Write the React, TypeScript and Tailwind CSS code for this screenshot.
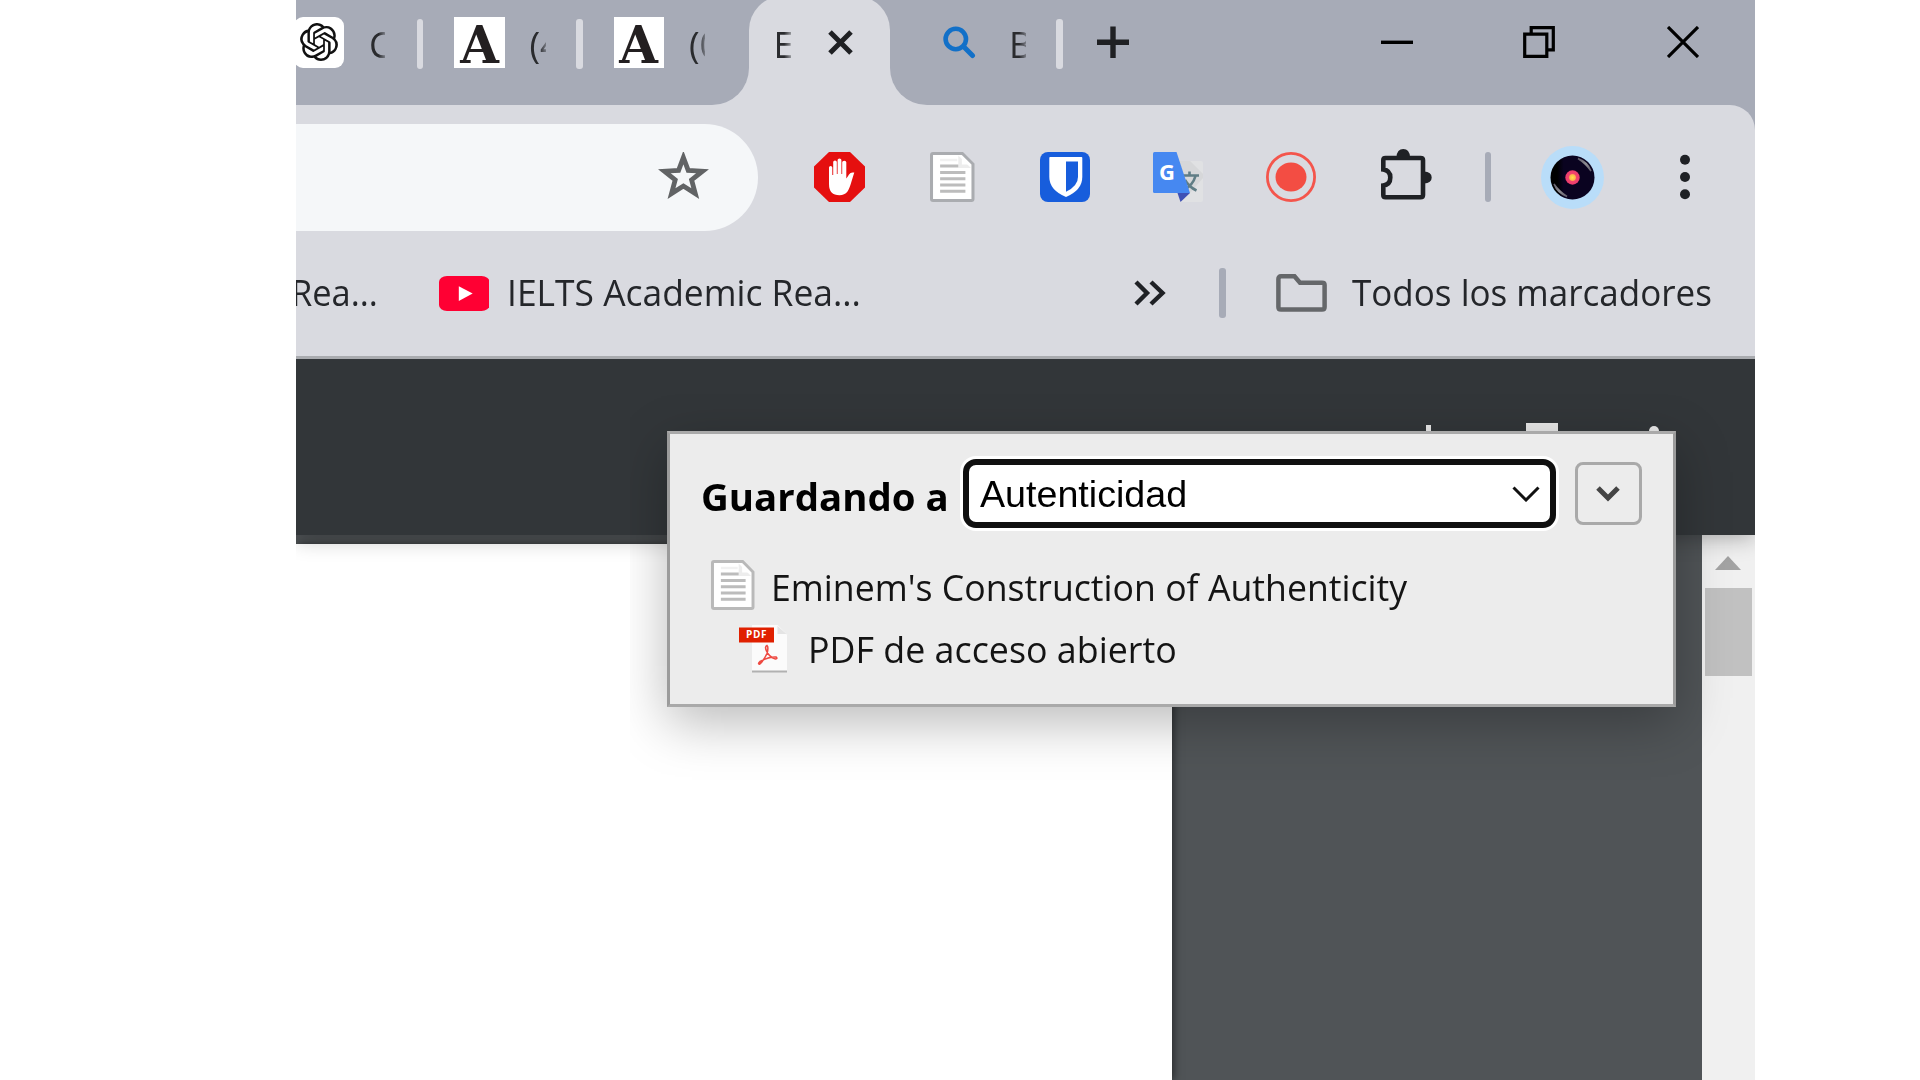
import React, { useLayoutEffect, useRef, useState } from "react";
import { SiOpenai } from "react-icons/si";

/* Single-line text condensed or expanded to a given advance width. */
function FitText({ children, width, className = "" }: { children: string; width: number; className?: string }) {
  const ref = useRef<HTMLSpanElement>(null);
  const [scale, setScale] = useState(1);
  useLayoutEffect(() => {
    if (ref.current) setScale(width / ref.current.offsetWidth);
  }, [width, children]);
  return (
    <span className="block shrink-0" style={{ width }}>
      <span
        ref={ref}
        className={"inline-block origin-left whitespace-nowrap " + className}
        style={{ transform: `scaleX(${scale})` }}
      >
        {children}
      </span>
    </span>
  );
}

const segoe = "font-['Open_Sans',sans-serif] text-[36px] leading-[48px]";

function TabTitle({ children, className }: { children: string; className: string }) {
  return (
    <span
      className={
        "mt-[21px] block shrink-0 overflow-hidden whitespace-nowrap text-[#2a2b2e] [mask-image:linear-gradient(to_right,black_60%,transparent_125%)] " +
        segoe + " " + className
      }
    >
      {children}
    </span>
  );
}

function TabSeparator({ className }: { className: string }) {
  return <span className={"mt-[18.5px] h-[50.5px] w-[6.5px] shrink-0 rounded-[3px] bg-[#d9dae0] " + className} />;
}

function AcademiaIcon({ className }: { className: string }) {
  return (
    <span
      className={
        "mt-[17px] flex h-[50.5px] w-[50.5px] shrink-0 items-center justify-center bg-white pt-[3px] font-['DejaVu_Serif',serif] text-[53px] font-bold leading-[50px] text-[#231f20] " +
        className
      }
    >
      <span className="inline-block scale-x-[0.94]">A</span>
    </span>
  );
}

function TabStrip() {
  return (
    <div className="flex h-[105px] items-start overflow-hidden bg-[#a7abb7]">
      <span className="-ml-[2px] mt-[17px] flex h-[50.5px] w-[50px] shrink-0 items-center justify-center rounded-[9px] bg-white">
        <SiOpenai className="-ml-px h-[38px] w-[38px] text-[#111]" />
      </span>
      <TabTitle className="ml-[25px] w-[16px]">C</TabTitle>
      <TabSeparator className="ml-[31.5px]" />
      <AcademiaIcon className="ml-[31px]" />
      <TabTitle className="ml-[25px] w-[16px]">(4</TabTitle>
      <TabSeparator className="ml-[30.5px]" />
      <AcademiaIcon className="ml-[31px]" />
      <TabTitle className="ml-[25px] w-[16px]">(0</TabTitle>
      <span className="ml-[6.5px] mt-[68px] h-[37px] w-[37px] shrink-0 bg-[#d9dae0]">
        <span className="block h-full w-full rounded-br-full bg-[#a7abb7]" />
      </span>
      <div className="-mt-[4px] flex h-[109px] w-[141px] shrink-0 items-start rounded-t-[34px] bg-[#d9dae0] pt-1">
        <TabTitle className="ml-[25px] w-[17px]">E</TabTitle>
        <svg className="ml-[37px] mt-[30px] h-[25px] w-[25px] shrink-0" viewBox="0 0 25 25">
          <path d="M2 2 L23 23 M23 2 L2 23" stroke="#1f2023" strokeWidth="5" />
        </svg>
      </div>
      <span className="mt-[68px] h-[37px] w-[37px] shrink-0 bg-[#d9dae0]">
        <span className="block h-full w-full rounded-bl-full bg-[#a7abb7]" />
      </span>
      <svg className="ml-[16.5px] mt-[26px] h-[33px] w-[33px] shrink-0" viewBox="0 0 33 33">
        <circle cx="12.8" cy="13" r="10.2" fill="none" stroke="#1270c8" strokeWidth="4.6" />
        <path d="M20.5 20.5 L29.5 29.5" stroke="#1270c8" strokeWidth="5" strokeLinecap="round" />
      </svg>
      <TabTitle className="ml-[33px] w-[17px]">B</TabTitle>
      <TabSeparator className="ml-[30px]" />
      <svg className="ml-[34px] mt-[26px] h-8 w-8 shrink-0" viewBox="0 0 32 32">
        <path d="M16 0.5 V32 M0 16.3 H32" stroke="#1f2023" strokeWidth="5.4" />
      </svg>
      <svg className="ml-auto mt-[26px] h-8 w-8 shrink-0" viewBox="0 0 32 32">
        <path d="M0 16.3 H32" stroke="#000" strokeWidth="3.4" />
      </svg>
      <svg className="ml-[110.5px] mt-[26px] h-8 w-8 shrink-0" viewBox="0 0 32 32">
        <path d="M1.7 8.2 H23.8 V30.3 H1.7 Z M8.2 8 V1.7 H30.3 V23.8 H24" fill="none" stroke="#000" strokeWidth="3.2" />
      </svg>
      <svg className="ml-[112px] mr-[55.5px] mt-[26px] h-8 w-8 shrink-0" viewBox="0 0 32 32">
        <path d="M1 1 L31 31 M31 1 L1 31" stroke="#000" strokeWidth="3.2" />
      </svg>
    </div>
  );
}

function DocumentIcon({ className, stroke }: { className: string; stroke: string }) {
  return (
    <svg className={"shrink-0 " + className} viewBox="0 0 44 50" preserveAspectRatio="none">
      <path d="M3 1.5 H32 L42.5 12 V47 Q42.5 48.5 41 48.5 H3 Q1.5 48.5 1.5 47 V3 Q1.5 1.5 3 1.5 Z" fill="#fff" stroke={stroke} strokeWidth="3" />
      <path d="M28 3.5 L40.5 16 H28 Z" fill="#ededed" />
      <path d="M31.5 3.5 L40.5 12.5 H31.5 Z" fill="#fff" />
      <path d="M10 8 H27" stroke="#f1f1f1" strokeWidth="2.5" />
      <path d="M10 14 H28 M10 20.5 H35 M10 26.7 H35 M10 33 H35 M10 39.2 H35" stroke="#bcbcbc" strokeWidth="3" />
    </svg>
  );
}

function AddressRow() {
  return (
    <div className="flex h-[125.5px] items-start pt-[18.5px]">
      <div className="flex h-[107px] w-[462px] shrink-0 rounded-r-full bg-[#f5f7f9]">
        <svg className="ml-[361.5px] mt-[28px] h-[47px] w-[51px]" viewBox="0 0 51 47">
          <path
            d="M25.4 5.5 L30.2 18.4 L44.5 19.2 L33.6 27.8 L37.3 41.6 L25.4 34 L13.5 41.6 L17.2 27.8 L6.3 19.2 L20.6 18.4 Z"
            fill="none"
            stroke="#616365"
            strokeWidth="4.8"
            strokeMiterlimit="10"
          />
        </svg>
      </div>
      <div className="ml-[56px] flex h-[107px] items-center">
        <svg className="h-[50px] w-[51px] shrink-0" viewBox="0 0 51 50">
          <path d="M15 0 H36 L51 14.5 V35.5 L36 50 H15 L0 35.5 V14.5 Z" fill="#e50f0f" />
          <path
            d="M15 15.5 Q15 14 16.6 14 Q18.3 14 18.3 15.5 V23 H19.2 V10 Q19.2 8.4 21 8.4 Q22.8 8.4 22.8 10 V22 H23.6 V8 Q23.6 6.4 25.5 6.4 Q27.4 6.4 27.4 8 V22 H28.2 V10.3 Q28.2 8.8 30.3 8.8 Q32.3 8.8 32.3 10.3 V26.5 Q33.5 25 35 22.5 Q36.3 20.5 38.5 20.5 H40.3 Q39.5 23 37.5 29.5 Q35.5 36.5 33.5 39.5 Q30.5 43.3 25.5 43.3 Q15 43.3 15 32 Z"
            fill="#fff"
          />
        </svg>
        <DocumentIcon className="ml-[65px] h-[50px] w-[44.5px]" stroke="#aaacb0" />
        <svg className="ml-[65.5px] h-[50px] w-[50px] shrink-0" viewBox="0 0 50 50">
          <rect width="50" height="50" rx="8" fill="#175ddc" />
          <path d="M10 5 H41.5 Q42.3 5 42.3 6 V25 Q42.3 38 26 45 Q9.3 38 9.3 25 V6 Q9.3 5 10 5 Z" fill="#fff" />
          <path d="M26 9.5 H38 V25 Q38 34 26 39.8 Z" fill="#175ddc" />
        </svg>
        <svg className="ml-[63px] h-[50px] w-[50px] shrink-0" viewBox="0 0 50 50">
          <path d="M22 9 H48 Q50 9 50 11 V48 Q50 50 48 50 H27 Z" fill="#e0e1e3" />
          <path d="M26 9 L37 41 L50 26 V22 L37 9 Z" fill="#cfd0d2" opacity=".6" />
          <path d="M30 23.5 H46 M36.5 19.5 V23 M42.5 24 Q40 33 31 38 M32 28 Q36 35 43.5 38.5" fill="none" stroke="#607d85" strokeWidth="2.6" />
          <path d="M24.5 41 H37 L27.5 50 Z" fill="#3f51b5" />
          <path d="M1.5 0 H23.5 L37 41 H1.5 Q0 41 0 39.5 V1.5 Q0 0 1.5 0 Z" fill="#4688f1" />
          <text x="6" y="28.4" fill="#fff" fontFamily="Open Sans, sans-serif" fontWeight="700" fontSize="22">G</text>
        </svg>
        <svg className="ml-[63px] h-[50px] w-[50px] shrink-0" viewBox="0 0 50 50">
          <circle cx="25" cy="25" r="23.6" fill="none" stroke="#f4554c" strokeWidth="2.8" />
          <ellipse cx="25" cy="25" rx="15.5" ry="14.5" fill="#f34d43" />
        </svg>
        <svg className="-mt-[6px] ml-[65px] h-[51px] w-[51px] shrink-0" viewBox="0 0 51 51">
          <path
            d="M4.5 9 H39.5 Q42 9 42 11 V46 Q42 48.2 39.5 48.2 H4.5 Q2.3 48.2 2.3 46 V36.5 Q9.3 35.5 9.3 28.5 Q9.3 21.5 2.3 20.5 V11 Q2.3 9 4.5 9 Z"
            fill="none"
            stroke="#1f2125"
            strokeWidth="4.6"
          />
          <path d="M15.5 8 Q16 0 22.3 0 Q28.5 0 29 8 Z M43 22.5 Q50.7 23 50.7 28.5 Q50.7 34 43 34.5 Z" fill="#1f2125" />
        </svg>
        <span className="ml-[52.5px] h-[50px] w-[6.5px] rounded-[3px] bg-[#a7abb7]" />
        <svg className="ml-[50px] h-[63px] w-[63px] shrink-0" viewBox="0 0 63 63">
          <defs>
            <radialGradient id="label">
              <stop offset="0" stopColor="#ffe14a" />
              <stop offset=".4" stopColor="#fdb44b" />
              <stop offset=".55" stopColor="#f0456c" />
              <stop offset="1" stopColor="#ee3a6e" />
            </radialGradient>
            <linearGradient id="vinyl" x1="0" x2="1">
              <stop offset=".15" stopColor="#000" />
              <stop offset=".3" stopColor="#0a0320" />
              <stop offset="1" stopColor="#0a0320" />
            </linearGradient>
            <linearGradient id="sheen" x1="0" y1="0" x2="1" y2="1">
              <stop offset="0" stopColor="#0a0320" />
              <stop offset=".5" stopColor="#8f8d92" />
              <stop offset="1" stopColor="#0a0320" />
            </linearGradient>
          </defs>
          <circle cx="31.5" cy="31.5" r="31.5" fill="#b9ddf9" />
          <circle cx="31.5" cy="31.5" r="22" fill="url(#vinyl)" />
          <path d="M37 12.5 Q46.5 16 50 25 Q45 17.5 37 12.5 Z M26 50.5 Q16.5 47 13 38 Q18 45.5 26 50.5 Z" fill="url(#sheen)" stroke="url(#sheen)" strokeWidth="1.5" />
          <circle cx="31.5" cy="31.5" r="7.2" fill="url(#label)" />
        </svg>
        <svg className="ml-[76px] h-[46px] w-[10px] shrink-0" viewBox="0 0 10 46">
          <circle cx="5" cy="5.7" r="5" fill="#1f2125" />
          <circle cx="5" cy="23" r="5" fill="#1f2125" />
          <circle cx="5" cy="40.3" r="5" fill="#1f2125" />
        </svg>
      </div>
    </div>
  );
}

function BookmarksRow() {
  return (
    <div className="flex h-[125.5px] items-start overflow-hidden pt-[36.5px] text-[#24262a]">
      <span className="-ml-[5px] mt-[1.5px] shrink-0">
        <FitText width={87} className={segoe}>Rea...</FitText>
      </span>
      <svg className="ml-[60.5px] mt-[9px] h-[35px] w-[50.5px] shrink-0" viewBox="0 0 51 35" preserveAspectRatio="none">
        <rect width="51" height="35" rx="8" ry="6" fill="#ff0033" />
        <path d="M20 10.2 L34 17.5 L20 25 Z" fill="#fff" />
      </svg>
      <span className="ml-[18px] mt-[1.5px] shrink-0">
        <FitText width={354} className={segoe}>IELTS Academic Rea...</FitText>
      </span>
      <svg className="ml-auto mt-[13px] h-[26px] w-8 shrink-0" viewBox="0 0 32 26">
        <path d="M2 2 L13 13 L2 24 M17 2 L28.5 13 L17 24" fill="none" stroke="#1f2125" strokeWidth="4.4" />
      </svg>
      <span className="ml-[53px] mt-[1px] h-[50px] w-[6.5px] shrink-0 rounded-[3px] bg-[#a7abb7]" />
      <svg className="ml-[50px] mt-[7px] h-[38px] w-[51px] shrink-0" viewBox="0 0 51 38">
        <path
          d="M5 2.3 H18.5 L24 8.8 H46 Q48.6 8.8 48.6 11 V33 Q48.6 35.6 46 35.6 H5 Q2.4 35.6 2.4 33 V5 Q2.4 2.3 5 2.3 Z"
          fill="none"
          stroke="#65676a"
          strokeWidth="4.5"
        />
      </svg>
      <span className="ml-[25px] mr-[43px] mt-[1.5px] shrink-0">
        <FitText width={360} className={segoe}>Todos los marcadores</FitText>
      </span>
    </div>
  );
}

function PdfIcon() {
  return (
    <svg className="h-[50px] w-[50px] shrink-0" viewBox="0 0 50 50">
      <path d="M13 1 H38.5 L48 9.5 V47 H13 Z" fill="#000" opacity=".25" transform="translate(0 .5)" />
      <path d="M13 0 H38.5 L48 9.5 V45.5 H13 Z" fill="#fbfbfb" />
      <path d="M38.5 1 V9 H47.5 Z" fill="#e4e4e4" />
      <rect y="2.5" width="35" height="15" fill="#e02000" />
      <text x="17.5" y="13.4" textAnchor="middle" fill="#fff" fontFamily="Open Sans, sans-serif" fontWeight="700" fontSize="10" letterSpacing=".6">PDF</text>
      <path
        d="M28 20.5 Q25.5 21.5 27.5 26 Q30 32 36.5 34 Q39 33.5 37 32 Q30 31.5 21 36.5 Q18.5 39 20.5 39.2 Q24 37 28 28.5 Q29.8 22 28 20.5 Z"
        fill="none"
        stroke="#ee4a42"
        strokeWidth="1.6"
      />
    </svg>
  );
}

function SavePopup() {
  return (
    <div className="h-[276px] w-[1009px] border-[3px] border-[#a9a9a9] border-l-[#9b9b9b] border-r-[#9b9b9b] bg-[#ececec] shadow-[0_16px_50px_rgba(0,0,0,0.27)]">
      <div className="flex items-start pt-[25px]">
        <span className="ml-[31px] mt-[14px] block">
          <FitText width={248} className="font-['Open_Sans',sans-serif] text-[37px] font-bold leading-[48px] text-black">
            Guardando a
          </FitText>
        </span>
        <div className="ml-[14px] flex h-[69px] w-[592.5px] shrink-0 items-center rounded-[13px] border-[6.5px] border-[#101010] bg-white ring-[3px] ring-white">
          <span className="ml-[11px] mt-[3px] font-['Liberation_Sans',Arial,sans-serif] text-black">
            <FitText width={207} className="text-[36px] leading-[40px]">Autenticidad</FitText>
          </span>
          <svg className="ml-auto mr-[10px] h-4 w-[28px]" viewBox="0 0 28 16">
            <path d="M1.5 1.5 L14 14 L26.5 1.5" fill="none" stroke="#111" strokeWidth="3" />
          </svg>
        </div>
        <div className="ml-[19px] mt-[3px] flex h-[63px] w-[67px] shrink-0 items-center justify-center rounded-[8px] border-[3px] border-[#a9a9a9]">
          <svg className="h-[16px] w-6" viewBox="0 0 24 16">
            <path d="M2 2 L12 12 L22 2" fill="none" stroke="#444" strokeWidth="5" />
          </svg>
        </div>
      </div>
      <div className="mt-[32px] flex items-start">
        <DocumentIcon className="ml-[41px] h-[50px] w-[43.5px]" stroke="#b9b9b9" />
        <span className="ml-[16px] mt-[4px] text-[#141414]">
          <FitText width={636} className={segoe}>Eminem's Construction of Authenticity</FitText>
        </span>
      </div>
      <div className="mt-[13px] flex items-start">
        <span className="ml-[69px]"><PdfIcon /></span>
        <span className="ml-[19px] mt-[1px] text-[#141414]">
          <FitText width={369} className={segoe}>PDF de acceso abierto</FitText>
        </span>
      </div>
    </div>
  );
}

function Viewer() {
  return (
    <div className="relative flex h-[721px] flex-col overflow-hidden bg-[#505457]">
      <div className="relative z-10 flex h-[175.5px] shrink-0 items-start bg-[#323639] shadow-[0_2px_22px_rgba(0,0,0,0.32)]">
        <span className="ml-[1130px] mt-[66px] h-10 w-[5px] bg-[#e8e8e8]" />
        <span className="ml-[95px] mt-[64px] h-10 w-8 bg-[#e8e8e8]" />
        <span className="ml-[91px] mt-[67px] h-[10px] w-[10px] rounded-full bg-[#e8e8e8]" />
      </div>
      <div className="flex grow">
        <div className="mt-[9px] w-[875.5px] shrink-0 bg-white shadow-[2px_0_8px_rgba(0,0,0,0.5)]" />
        <div className="ml-auto flex w-[52.5px] shrink-0 flex-col items-center bg-[#f0f0f0]">
          <svg className="mt-[21px] h-[14px] w-[26px]" viewBox="0 0 26 14">
            <path d="M13 0 L26 14 H0 Z" fill="#a3a3a3" />
          </svg>
          <span className="mt-[18.5px] h-[87.5px] w-[47px] bg-[#c1c1c1]" />
        </div>
      </div>
      <div className="absolute bottom-0 left-[334px] right-0 top-[35px] z-20 overflow-hidden pl-[37px] pt-[37px]">
        <SavePopup />
      </div>
    </div>
  );
}

export default function App() {
  return (
    <div className="h-[1080px] w-[1920px] overflow-hidden bg-white">
      <div className="ml-[296px] flex h-full w-[1458.5px] flex-col overflow-hidden">
        <TabStrip />
        <div className="h-[254px] shrink-0 bg-[#a7abb7]">
          <div className="h-full rounded-tr-[25px] border-b-[3px] border-[#a9abaf] bg-[#d9dae0]">
            <AddressRow />
            <BookmarksRow />
          </div>
        </div>
        <Viewer />
      </div>
    </div>
  );
}
